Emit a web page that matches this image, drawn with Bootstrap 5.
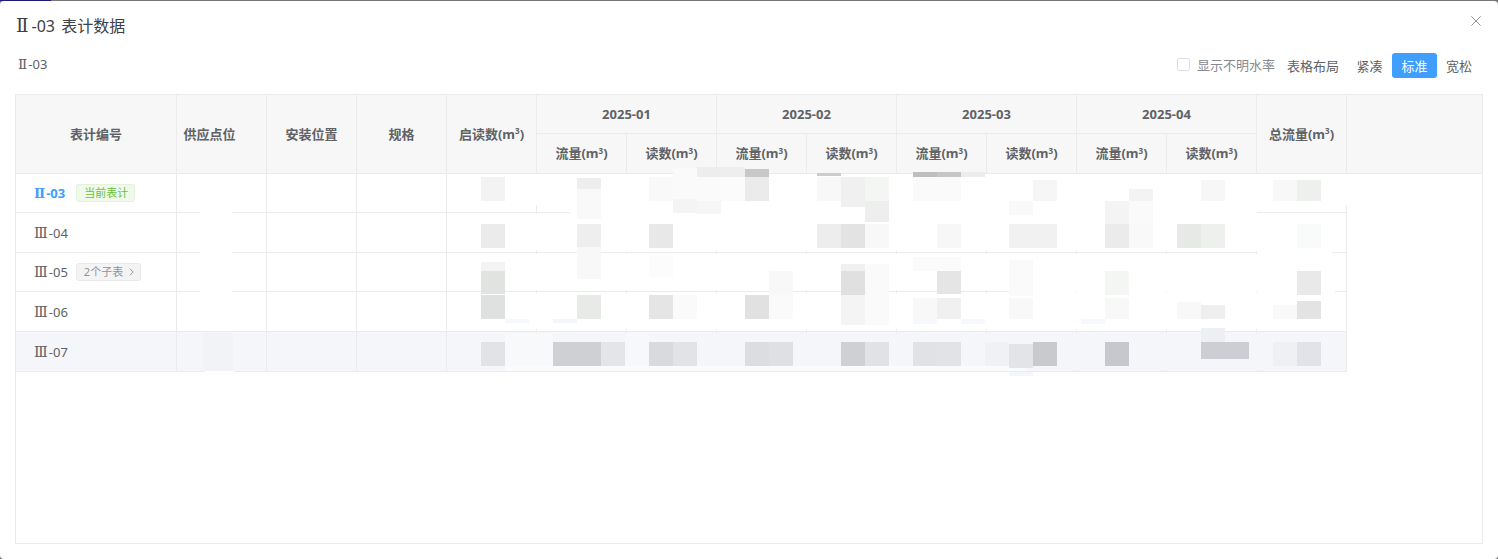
<!DOCTYPE html>
<html lang="zh-CN">
<head>
<meta charset="utf-8">
<title>表计数据</title>
<link rel="stylesheet" href="https://cdn.jsdelivr.net/npm/bootstrap@5.3.0/dist/css/bootstrap.min.css">
<style>
html,body{height:100%;overflow:hidden}
body{background:#777;font-family:"Noto Sans","Noto Sans CJK SC",sans-serif;font-size:13px;color:#606266;padding-top:1px}
.navy-edge{position:absolute;left:0;top:0;width:51px;height:1px;background:#1c1c78}
.sheet{position:relative;height:558px;background:#fff;border-radius:4px;padding:15px 15px 15px}
.roman{font-family:"DejaVu Serif",serif;font-size:1.1em;font-weight:400;margin-right:1px;line-height:0}
.cur-code .roman{font-weight:700;font-size:1.02em}
.sheet-title .roman{font-size:1.15em;margin-right:3px}
.meter-name .roman{font-size:1.05em}
.sheet-title{font-size:16px;line-height:22px;color:#3e4045;margin-top:-1px;padding-left:1px}
.title-cn{margin-left:2px}
.close-x{width:10px;height:10px;margin-right:2px;color:#909399;display:block}
.sheet-head{height:22px}
.tool-row{height:25px;margin-top:15px;margin-bottom:16px;line-height:1}
.meter-name{padding-left:3px;padding-top:5px;color:#606266}
.check-box{width:13px;height:13px;border:1px solid #dcdfe6;border-radius:2px;background:#fff;margin-right:7px;margin-top:-2px}
.check-label{color:#87898e;margin-right:12px;margin-top:-1px}
.layout-label{margin-right:6px;padding-top:1px;width:54px}
.size-opt{width:45px;height:25px;text-align:center;line-height:26px;border-radius:3px;color:#606266}
.size-on{background:#409eff;color:#fff}
.size-last{width:44px;margin-right:2px}
.grid-box{height:450px;border:1px solid #ebebeb;position:relative}
.data-grid{border-collapse:separate;border-spacing:0;table-layout:fixed;width:1466px}
.data-grid th,.data-grid td{border-right:1px solid #ebebeb;border-bottom:1px solid #ebebeb;padding:2px 0 0;text-align:center;vertical-align:middle}
.data-grid th{background:#f7f7f7;color:#606266;font-weight:700;font-size:13px;padding-top:1px}
.data-grid th[colspan]{padding-top:2px}
.data-grid th.off-center{padding-right:24px}
.data-grid th:last-child.fill-col{border-right:0}
.data-grid td:first-child{text-align:left;padding-left:18px}
.h39{height:39px}
.h40{height:40px}
.data-grid sup{font-size:8px;top:-.55em;line-height:0}
.row-hi td{background:#f5f6fa}
.cur-code{color:#409eff;font-weight:700}
.meter-tag{display:inline-block;height:18px;line-height:16px;font-size:11px;border-radius:3px;border:1px solid;padding:0 6px 0 7px;vertical-align:1px}
.tag-ok{background:#f0f9eb;border-color:#e1f3d8;color:#67c23a;margin-left:11px}
.tag-sub{background:#f4f4f5;border-color:#e9e9eb;color:#909399;margin-left:8px}
.tag-sub svg{margin-left:6px;vertical-align:0}
.smudge{position:absolute;left:0;top:0;pointer-events:none}
</style>
</head>
<body>
<div class="navy-edge"></div>
<div class="sheet">
  <div class="sheet-head d-flex justify-content-between">
    <div class="sheet-title"><span class="roman">Ⅱ</span>-03 <span class="title-cn">表计数据</span></div>
    <svg class="close-x" viewBox="0 0 10 10"><path d="M.3.3l9.4 9.4M9.7.3L.3 9.7" stroke="currentColor" stroke-width="1" fill="none"/></svg>
  </div>
  <div class="tool-row d-flex justify-content-between">
    <div class="meter-name"><span class="roman">Ⅱ</span>-03</div>
    <div class="d-flex align-items-center">
      <span class="check-box"></span>
      <span class="check-label">显示不明水率</span>
      <span class="layout-label">表格布局</span>
      <span class="size-opt">紧凑</span>
      <span class="size-opt size-on">标准</span>
      <span class="size-opt size-last">宽松</span>
    </div>
  </div>
  <div class="grid-box">
    <table class="data-grid">
      <colgroup>
        <col style="width:161px"><col style="width:90px"><col style="width:90px"><col style="width:90px"><col style="width:90px">
        <col style="width:90px"><col style="width:90px"><col style="width:90px"><col style="width:90px"><col style="width:90px">
        <col style="width:90px"><col style="width:90px"><col style="width:90px"><col style="width:90px"><col>
      </colgroup>
      <thead>
        <tr class="h39">
          <th rowspan="2">表计编号</th><th rowspan="2" class="off-center">供应点位</th><th rowspan="2">安装位置</th><th rowspan="2">规格</th>
          <th rowspan="2">启读数(m<sup>3</sup>)</th>
          <th colspan="2">2025-01</th><th colspan="2">2025-02</th><th colspan="2">2025-03</th><th colspan="2">2025-04</th>
          <th rowspan="2">总流量(m<sup>3</sup>)</th><th rowspan="2" class="fill-col"></th>
        </tr>
        <tr class="h40">
          <th>流量(m<sup>3</sup>)</th><th>读数(m<sup>3</sup>)</th><th>流量(m<sup>3</sup>)</th><th>读数(m<sup>3</sup>)</th>
          <th>流量(m<sup>3</sup>)</th><th>读数(m<sup>3</sup>)</th><th>流量(m<sup>3</sup>)</th><th>读数(m<sup>3</sup>)</th>
        </tr>
      </thead>
      <tbody>
        <tr class="h39"><td><span class="cur-code"><span class="roman">Ⅱ</span>-03</span><span class="meter-tag tag-ok">当前表计</span></td><td></td><td></td><td></td><td></td><td></td><td></td><td></td><td></td><td></td><td></td><td></td><td></td><td></td></tr>
        <tr class="h40"><td><span class="roman">Ⅲ</span>-04</td><td></td><td></td><td></td><td></td><td></td><td></td><td></td><td></td><td></td><td></td><td></td><td></td><td></td></tr>
        <tr class="h39"><td><span class="roman">Ⅲ</span>-05<span class="meter-tag tag-sub">2个子表<svg width="5" height="8" viewBox="0 0 5 8"><path d="M1 .8L4.2 4 1 7.2" fill="none" stroke="currentColor"/></svg></span></td><td></td><td></td><td></td><td></td><td></td><td></td><td></td><td></td><td></td><td></td><td></td><td></td><td></td></tr>
        <tr class="h40"><td><span class="roman">Ⅲ</span>-06</td><td></td><td></td><td></td><td></td><td></td><td></td><td></td><td></td><td></td><td></td><td></td><td></td><td></td></tr>
        <tr class="h40 row-hi"><td><span class="roman">Ⅲ</span>-07</td><td></td><td></td><td></td><td></td><td></td><td></td><td></td><td></td><td></td><td></td><td></td><td></td><td></td></tr>
      </tbody>
    </table>
  </div>
  <svg class="smudge" id="smudge" width="1498" height="558" viewBox="0 1 1498 558" xmlns="http://www.w3.org/2000/svg"></svg>
</div>
<script src="https://cdn.jsdelivr.net/npm/bootstrap@5.3.0/dist/js/bootstrap.bundle.min.js"></script>
<script>
var W='#fff',R='#f5f6fa';
var cover=[
[200,174,32,157,W],[203,333,30,38,'#f2f3f7'],[205,371,29,12,W],
[480,174,880,31,W],[570,205,687,46,W],[462,214,878,36,W],[462,254,878,36,W],[470,293,876,36,W],
[462,333,884,37,R],[505,333,48,38,'#f8f9fb'],[625,333,24,38,'#f7f8fb'],[505,366,520,5,'#fafbfc'],
[1009,372,24,4,R],[1025,289,310,3,W],[570,250,60,2,W],[1257,252,75,2,W]
];
var sq=[
[481,177,24,24,'#f3f3f3'],[577,178,24,11,'#eee'],[577,189,24,30,'#f9f9f9'],[649,177,24,24,'#f9f9f9'],[673,168,24,33,'#fafafa'],
[673,199,24,14,'#f4f4f4'],[697,200,24,14,'#f6f6f6'],[697,167,24,10,'#ededed'],[697,177,24,24,'#fafafa'],[721,167,24,10,'#eee'],[721,177,24,24,'#fbfbfb'],
[745,169,24,8,'#c8c8c8'],[745,177,24,24,'#ebebeb'],[817,173,24,3,'#ccc'],[817,177,24,24,'#f8f8f8'],[841,177,24,30,'#f0f0f0'],[865,177,24,24,'#f4f6f4'],[865,201,24,21,'#eee'],
[913,172,24,5,'#bebebe'],[937,172,24,5,'#c6c6c6'],[961,172,24,5,'#ececec'],[913,177,24,24,'#fafafa'],[937,177,24,24,'#fafafa'],
[1033,180,24,21,'#f6f6f6'],[1009,201,24,14,'#f9f9f9'],[1105,201,24,23,'#f4f4f4'],[1129,189,24,12,'#f3f3f3'],[1129,201,24,23,'#fafafa'],[1201,180,24,21,'#f7f7f7'],[1273,180,24,21,'#f8f8f8'],[1297,180,24,21,'#eef0ee'],
[481,224,24,24,'#ebebeb'],[577,224,24,24,'#eee'],[649,224,24,24,'#e8e8e8'],[817,224,24,24,'#ecedec'],[841,224,24,24,'#e3e3e3'],[865,224,24,24,'#f8f8f8'],[937,224,24,24,'#f7f7f7'],[1009,224,24,24,'#f1f1f1'],[1033,224,24,24,'#f1f1f1'],[1105,224,24,24,'#ebebeb'],[1129,224,24,24,'#f9f9f9'],[1177,224,24,24,'#e7e9e7'],[1201,224,24,24,'#eef0ee'],[1297,224,24,24,'#f9fbfa'],
[481,262,24,9,'#f3f3f3'],[481,271,24,23,'#e1e3e1'],[577,247,24,32,'#f8f8f8'],[649,253,24,24,'#fcfcfc'],[769,271,24,24,'#f8f8f8'],[841,264,24,7,'#f0f0f0'],[841,271,24,24,'#e0e0e0'],[865,264,24,31,'#fafafa'],
[913,257,24,14,'#fbfbfb'],[937,257,24,14,'#fbfbfb'],[937,271,24,23,'#e5e5e5'],[1009,260,24,36,'#fafafa'],[1105,271,24,24,'#f4f6f4'],[1297,271,24,24,'#e9e9e9'],
[481,295,24,24,'#dfe0e0'],[577,295,24,24,'#e8eae8'],[649,295,24,24,'#e5e5e5'],[673,295,24,24,'#fafafa'],[745,295,24,24,'#e1e1e1'],[769,295,24,24,'#fafafa'],[841,295,24,30,'#f4f4f4'],[865,295,24,30,'#fafafa'],
[913,298,24,21,'#f8f8f8'],[937,298,24,21,'#f0f0f0'],[1009,298,24,21,'#f8f8f8'],[1105,298,24,21,'#f8f8f8'],[1177,302,24,17,'#f8f8f8'],[1201,305,24,14,'#eee'],[1273,305,24,14,'#f9f9f9'],[1297,301,24,18,'#e3e3e3'],
[505,319,24,4,'#f7f8fb'],[553,319,24,4,'#f5f6fa'],[913,319,24,5,'#f7f8fb'],[961,319,24,5,'#f7f8fb'],[1081,319,24,5,'#f7f8fb'],
[481,342,24,24,'#e2e3e6'],[553,342,24,24,'#cfd0d4'],[577,342,24,24,'#cfd0d4'],[601,342,24,24,'#e4e5e9'],[649,342,24,24,'#d9dadd'],[673,342,24,24,'#e2e3e6'],[745,342,24,24,'#dcdde1'],[769,342,24,24,'#dfe0e4'],[841,342,24,24,'#cfd0d4'],[865,342,24,24,'#e1e2e6'],
[913,342,24,24,'#e1e2e6'],[937,342,24,24,'#e2e3e7'],[985,342,24,24,'#f0f1f4'],[1009,344,24,24,'#e3e4e8'],[1033,342,24,24,'#c9cace'],[1105,342,24,24,'#c7c8cd'],[1201,342,24,17,'#cdced3'],[1225,342,24,17,'#cdced3'],[1201,328,24,14,'#eeeff3'],[1273,342,24,24,'#eff0f4'],[1297,342,24,24,'#e2e3e8']
];
var s='';
cover.concat(sq).forEach(function(r){s+='<rect x="'+r[0]+'" y="'+r[1]+'" width="'+r[2]+'" height="'+r[3]+'" fill="'+r[4]+'"/>';});
document.getElementById('smudge').innerHTML=s;
</script>
</body>
</html>
